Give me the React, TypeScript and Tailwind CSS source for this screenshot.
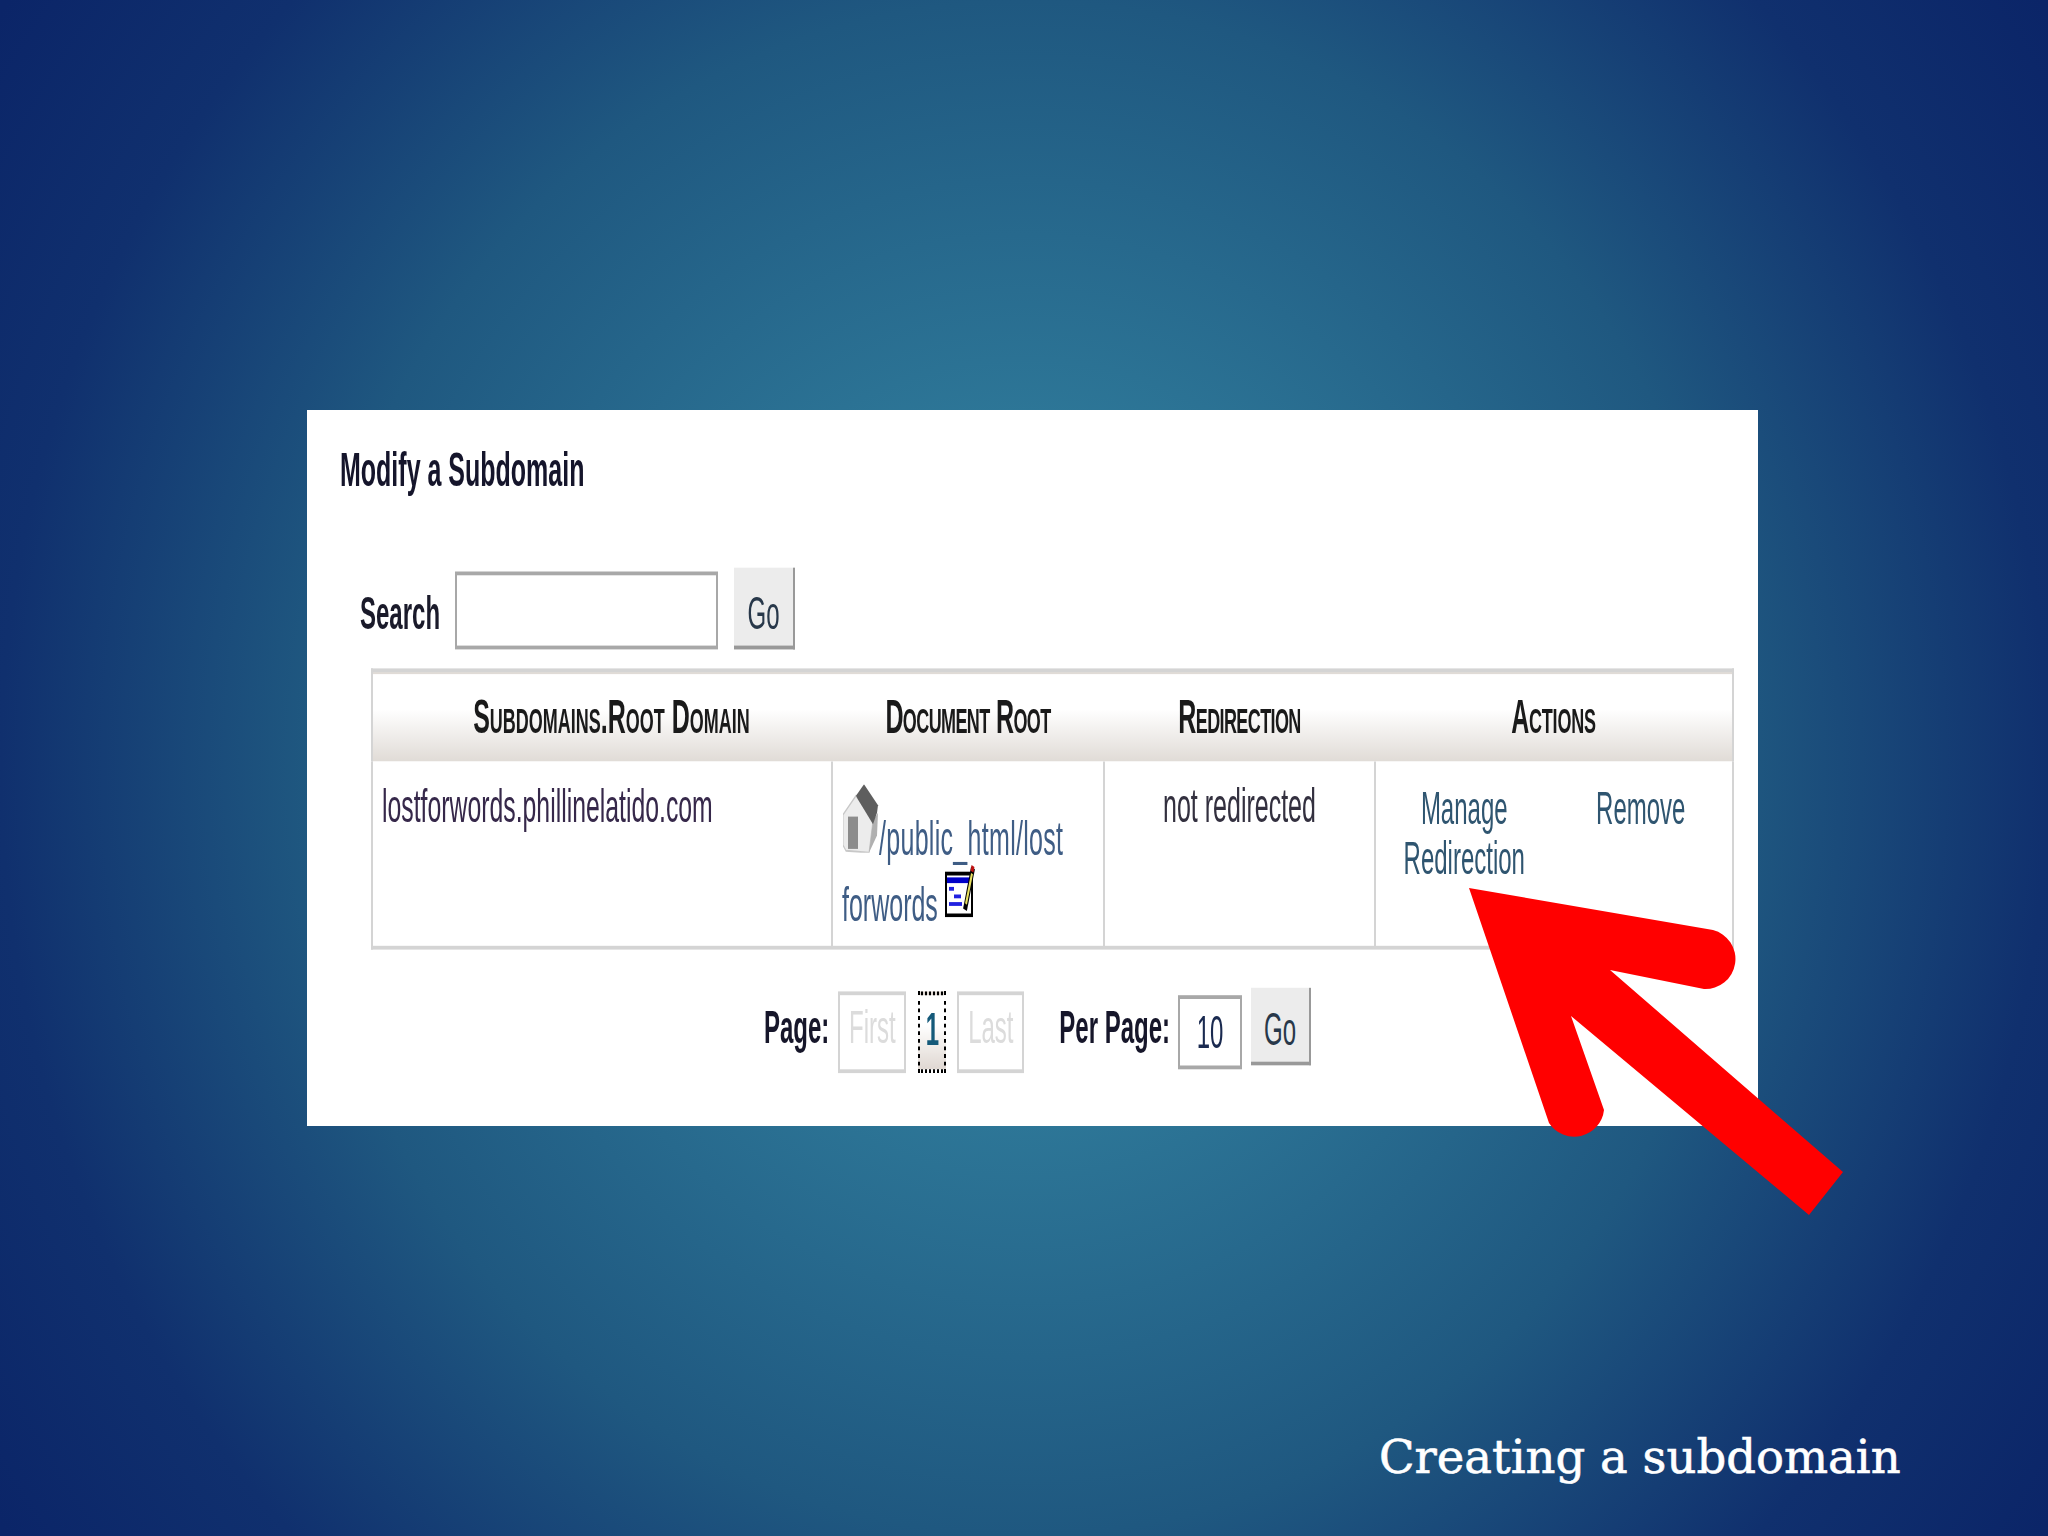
import React from 'react';

const HouseIcon = () => (
  <svg width="36" height="36" viewBox="0 0 36 36" className="shrink-0">
    <polygon points="13,6 30,19 26,36 3,35 0,32 0,16" fill="#ececec" stroke="#c8c8c8" />
    <polygon points="30,19 35,15 34,27 26,36" fill="#b0b0b0" />
    <polygon points="21,0 35,11 34,15 30,21 15,8 13,6" fill="#5e5e5e" />
    <rect x="5" y="17" width="10" height="17" fill="#8c8c8c" />
  </svg>
);

const NoteIcon = () => (
  <svg width="31" height="28" viewBox="0 0 31 28" className="shrink-0">
    <rect x="1" y="5" width="26" height="22" fill="#fff" stroke="#000" strokeWidth="2" />
    <rect x="2" y="7" width="22" height="3" fill="#0000c8" />
    <rect x="4" y="12" width="5" height="2" fill="#2020e0" />
    <rect x="9" y="16" width="7" height="2" fill="#2020e0" />
    <rect x="4" y="20" width="13" height="2" fill="#2020e0" />
    <line x1="28" y1="2" x2="20" y2="24" stroke="#000" strokeWidth="4" />
    <line x1="27" y1="5" x2="21" y2="21" stroke="#e8e060" strokeWidth="2" />
    <line x1="28" y1="1" x2="27" y2="4" stroke="#c01010" strokeWidth="3" />
  </svg>
);

const Arrow = () => (
  <svg width="2048" height="1536" viewBox="0 0 2048 1536" className="absolute inset-0 pointer-events-none">
    <path
      d="M1469 888 L1713 930 A30 30 0 0 1 1704 989 L1610 970 L1843 1172 L1809 1215 L1571 1016 L1604 1110 A30 30 0 0 1 1549 1123 Z"
      fill="#ff0000"
    />
  </svg>
);

const thClass = "font-bold text-[25px] text-[#1a1a1a] text-center [font-variant-caps:small-caps]";
const tdClass = "align-top border-l-2 border-[#d4d4d4] p-0";

const App: React.FC = () => {
  return (
    <div className="relative w-[2048px] h-[1536px] overflow-hidden font-['Liberation_Sans',sans-serif] bg-[radial-gradient(1100px_1180px_at_50%_50%,#32809f_0%,#2d7697_30%,#1f5880_65%,#10306e_93%,#0b2568_113%)]">
      <div className="pt-[410px]">
        <div className="ml-[307px] w-[1451px] h-[716px] bg-white">
          <div className="origin-top scale-y-[1.9] h-[377px]">
            <div className="pt-[19px] pl-[33px] h-[46px] font-bold text-[25px] leading-[25px] text-[#15152b]">
              Modify a Subdomain
            </div>

            <div className="mt-[37px] pl-[53px] flex items-end h-[43px]">
              <span className="font-bold text-[24px] leading-[38px] text-[#1a1a2a] w-[95px]">Search</span>
              <input className="w-[263px] h-[41px] border-2 border-[#a8a8a8] bg-white" />
              <button className="ml-[16px] w-[61px] h-[43px] pt-[7px] bg-[#ececec] border-r-2 border-b-2 border-[#999] text-[24px] leading-[30px] text-[#28384a]">
                Go
              </button>
            </div>

            <table className="mt-[10px] ml-[64px] w-[1361px] table-fixed border-collapse">
              <colgroup>
                <col className="w-[460px]" />
                <col className="w-[272px]" />
                <col className="w-[271px]" />
                <col className="w-[358px]" />
              </colgroup>
              <thead>
                <tr className="h-[48px] bg-gradient-to-b from-white from-40% to-[#e0dbd6] border-t-2 border-x-2 border-[#d4d4d4]">
                  <th className={`${thClass} pl-[18px] pt-[1px]`}>Subdomains.Root Domain</th>
                  <th className={`${thClass} pt-[1px] tracking-[-0.6px]`}>Document Root</th>
                  <th className={`${thClass} pt-[1px] tracking-[-0.6px]`}>Redirection</th>
                  <th className={`${thClass} pt-[1px] tracking-[-0.2px]`}>Actions</th>
                </tr>
              </thead>
              <tbody>
                <tr className="h-[98px] border-b-2 border-x-2 border-[#d4d4d4] text-[24px] leading-[25px]">
                  <td className="align-top pt-[11px] pl-[9px] text-[24.8px] text-[#36284a]">lostforwords.phillinelatido.com</td>
                  <td className={tdClass}>
                    <div className="pl-[10px] pt-[12px] text-[25px] text-[#3f5d85]">
                      <div className="flex items-end h-[36px]">
                        <HouseIcon />
                        <span className="leading-[25px] -mb-[5px] tracking-[0.3px]">/public_html/lost</span>
                      </div>
                      <div className="flex items-end mt-[6px]">
                        <span className="mr-[7px] -ml-[1px] leading-[25px]">forwords</span>
                        <span className="mb-[6px]">
                          <NoteIcon />
                        </span>
                      </div>
                    </div>
                  </td>
                  <td className={tdClass}>
                    <div className="pt-[11px] text-[25px] text-center text-[#33303f]">not redirected</div>
                  </td>
                  <td className={tdClass}>
                    <div className="pt-[12px] pr-[3px] grid grid-cols-2 text-center leading-[25.5px] text-[#2f5570]">
                      <span>Manage<br />Redirection</span>
                      <span>Remove</span>
                    </div>
                  </td>
                </tr>
              </tbody>
            </table>

            <div className="mt-[22px] pl-[457px] flex items-center h-[43px]">
              <span className="font-bold text-[24px] text-[#16162a] mr-[9px] -mt-[5px]">Page:</span>
              <span className="w-[68px] h-[43px] pb-[6px] border-2 border-[#d4d4d4] text-[24px] text-[#dcdcdc] flex items-center justify-center">First</span>
              <span className="ml-[12px] w-[28px] h-[43px] border-2 border-dotted border-black bg-gradient-to-b from-white from-40% to-[#e0d8d2] text-[24px] font-bold text-[#155a7a] flex items-start justify-center">1</span>
              <span className="ml-[11px] w-[67px] h-[43px] pb-[6px] border-2 border-[#d4d4d4] text-[24px] text-[#dcdcdc] flex items-center justify-center">Last</span>
              <span className="ml-[35px] font-bold text-[24px] text-[#16162a] -mt-[5px]">Per Page:</span>
              <input
                readOnly
                value="10"
                className="ml-[8px] w-[64px] h-[39px] border-2 border-[#a8a8a8] bg-white text-center text-[24px] text-[#1a2a50]"
              />
              <button className="ml-[9px] w-[60px] h-[41px] pt-[5px] bg-[#ececec] border-r-2 border-b-2 border-[#999] text-[24px] leading-[30px] text-[#28384a] -mt-[6px]">
                Go
              </button>
            </div>
          </div>
        </div>
      </div>

      <div className="mt-[301px] pl-[1379px] font-['DejaVu_Serif',serif] text-[46.5px] leading-[60px] text-white whitespace-nowrap [-webkit-text-stroke:0.6px_white]">
        Creating a subdomain
      </div>

      <Arrow />
    </div>
  );
};

export default App;
